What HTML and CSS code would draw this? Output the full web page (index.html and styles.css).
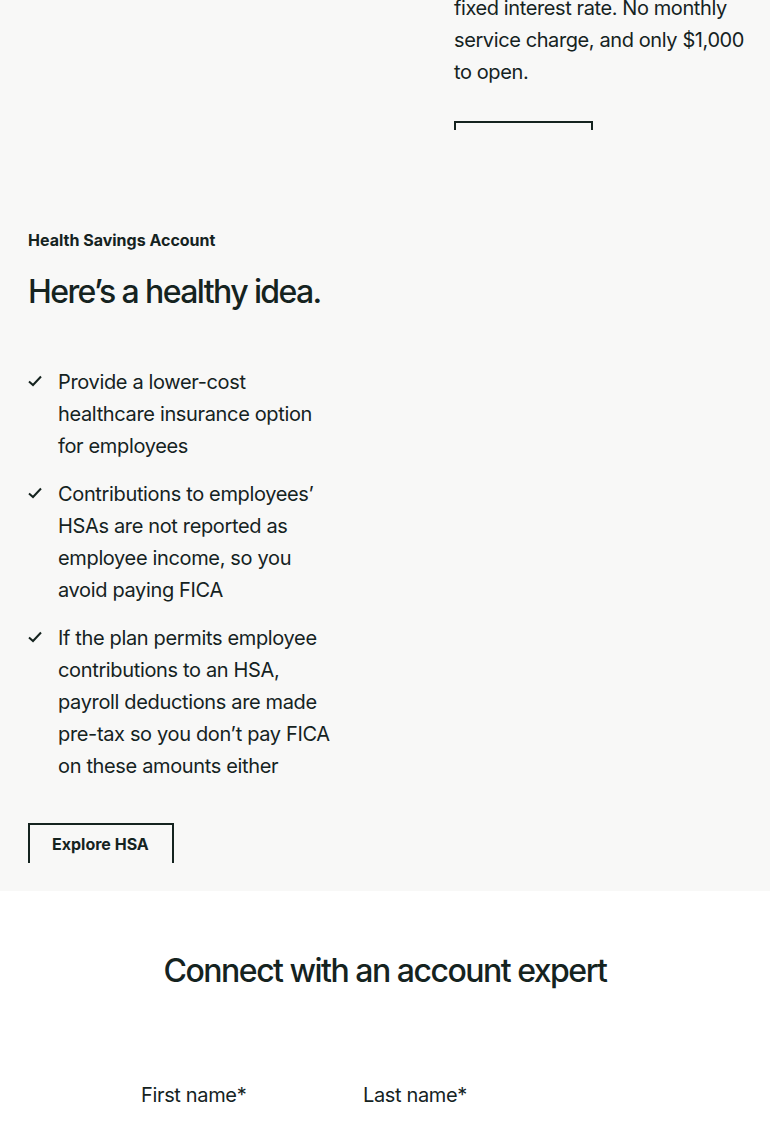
FILE: index.html
```html
<!DOCTYPE html>
<html lang="en">
<head>
<meta charset="utf-8">
<title>HSA</title>
<link rel="stylesheet" href="styles.css">
</head>
<body>
<div class="gray">
  <section class="promo">
    <div class="promo-media"></div>
    <div class="promo-text">
      <p class="body-text">fixed interest rate. No monthly service charge, and only $1,000 to open.</p>
      <div class="btn-clip btn-clip-top"><a class="btn btn-top" href="#">Open now</a></div>
    </div>
  </section>
  <section class="hsa">
    <div class="hsa-text">
      <p class="eyebrow">Health Savings Account</p>
      <h2 class="title">Here’s a healthy idea.</h2>
      <ul class="checks">
        <li class="check-item">
          <svg class="check-icon" viewBox="0 0 14 12" width="14" height="12" aria-hidden="true"><path d="M1 6.5 L5 10 L13 1.5" fill="none" stroke="#15231f" stroke-width="2"/></svg>
          <span>Provide a lower-cost healthcare insurance option for employees</span>
        </li>
        <li class="check-item">
          <svg class="check-icon" viewBox="0 0 14 12" width="14" height="12" aria-hidden="true"><path d="M1 6.5 L5 10 L13 1.5" fill="none" stroke="#15231f" stroke-width="2"/></svg>
          <span>Contributions to employees’ HSAs are not reported as employee income, so you avoid paying FICA</span>
        </li>
        <li class="check-item">
          <svg class="check-icon" viewBox="0 0 14 12" width="14" height="12" aria-hidden="true"><path d="M1 6.5 L5 10 L13 1.5" fill="none" stroke="#15231f" stroke-width="2"/></svg>
          <span>If the plan permits employee contributions to an HSA, payroll deductions are made pre-tax so you don’t pay FICA on these amounts either</span>
        </li>
      </ul>
      <div class="btn-clip btn-clip-hsa"><a class="btn btn-hsa" href="#">Explore HSA</a></div>
    </div>
  </section>
</div>
<section class="connect">
  <h2 class="connect-title">Connect with an account expert</h2>
  <form class="form">
    <label class="field-label">First name*</label>
    <label class="field-label">Last name*</label>
  </form>
</section>
</body>
</html>
```
FILE: styles.css
```css
* { box-sizing: border-box; }
html, body { margin: 0; padding: 0; }
body {
  font-family: Inter, "Noto Sans", sans-serif;
  color: #15231f;
  background: #ffffff;
  width: 770px;
  overflow: hidden;
}
.gray {
  background: #f8f8f7;
  padding: 0 28px 28px;
}
.promo {
  display: grid;
  grid-template-columns: 300px 300px;
  column-gap: 126px;
}
.body-text {
  margin: -8px 0 0;
  font-size: 20px;
  line-height: 32px;
  letter-spacing: -0.4px;
}
.btn-clip {
  overflow: hidden;
}
.btn-clip-top {
  margin-top: 33px;
  height: 9px;
}
.btn-clip-hsa {
  margin-top: 41px;
  height: 40px;
}
.btn {
  display: inline-block;
  border: 2px solid #15231f;
  padding: 0 22px;
  height: 44px;
  line-height: 38px;
  font-size: 16px;
  font-weight: 700;
  color: #15231f;
  text-decoration: none;
  white-space: nowrap;
}
.btn-top { width: 139px; }
.btn-hsa { width: 146px; }
.hsa {
  padding-top: 100px;
}
.hsa-text { width: 302px; }
.eyebrow {
  margin: 0;
  font-size: 16px;
  font-weight: 700;
  line-height: 20px;
}
.title {
  margin: 22px 0 0;
  font-size: 32px;
  font-weight: 500;
  line-height: 40px;
  letter-spacing: -1.6px;
  white-space: nowrap;
}
.checks {
  list-style: none;
  margin: 54px 0 0;
  padding: 0;
  display: flex;
  flex-direction: column;
  gap: 16px;
}
.check-item {
  display: flex;
  gap: 16px;
  font-size: 20px;
  line-height: 32px;
  letter-spacing: -0.35px;
}
.check-icon {
  flex: 0 0 14px;
  margin-top: 9px;
}
.connect {
  padding: 56px 0 0;
}
.connect-title {
  margin: 0;
  text-align: center;
  font-size: 32px;
  font-weight: 500;
  line-height: 48px;
  letter-spacing: -1.5px;
}
.form {
  width: 488px;
  margin: 84px auto 0;
  display: grid;
  grid-template-columns: 222px 1fr;
}
.field-label {
  font-size: 20px;
  line-height: 32px;
  letter-spacing: -0.35px;
}
```
